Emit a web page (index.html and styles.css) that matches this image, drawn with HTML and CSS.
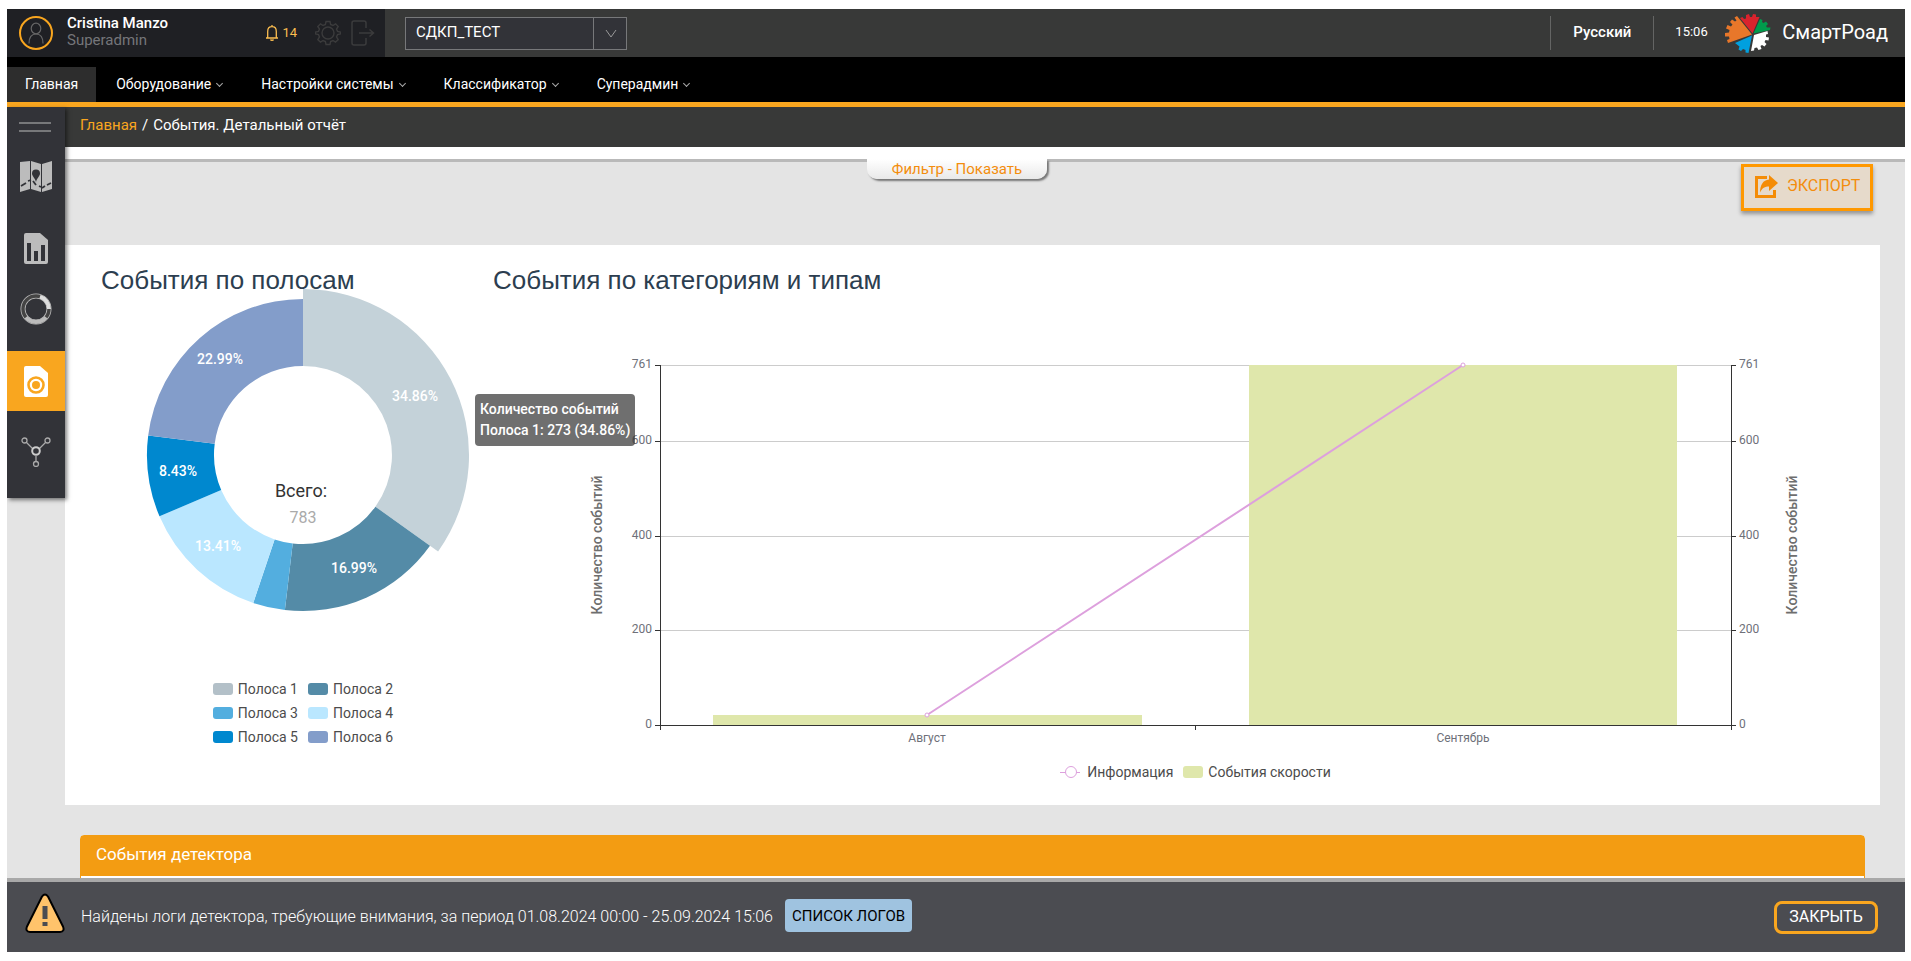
FILE: index.html
```html
<!DOCTYPE html>
<html lang="ru">
<head>
<meta charset="utf-8">
<meta name="viewport" content="width=device-width, initial-scale=1">
<title>СмартРоад — События. Детальный отчёт</title>
<link rel="stylesheet" href="styles.css">
</head>
<body>
<div class="app">
  <header class="topbar">
    <div class="user">
      <svg class="avatar" width="36" height="36" viewBox="0 0 36 36" fill="none">
        <circle cx="18" cy="18" r="16" stroke="#f9a61f" stroke-width="2"/>
        <ellipse cx="18" cy="13.5" rx="4.8" ry="5.3" stroke="#666" stroke-width="1.2"/>
        <path d="M11 28.500c0-6 2.500-9.500 7-9.500s7 3.500 7 9.500" stroke="#666" stroke-width="1.200"/>
      </svg>
      <div class="user-name"><strong>Cristina Manzo</strong><span>Superadmin</span></div>
      <button class="icon-btn bell" type="button" aria-label="Уведомления">
        <svg width="14" height="18" viewBox="0 0 14 18" fill="none" stroke="#fbbd50" stroke-width="1.300"><path d="M1 14h12M2.700 14V7.500C2.700 4.500 4.500 2.700 7 2.700s4.300 1.800 4.300 4.800V14M7 1v2M5.500 15.500c.3 1 2.700 1 3 0"/></svg>
        <span>14</span>
      </button>
      <button class="icon-btn gear" type="button" aria-label="Настройки">
        <svg width="26" height="26" viewBox="0 0 26 26" fill="none" stroke="#3b3b3c" stroke-width="1.400"><path d="M11 1.500h4l.6 3 2.300 1 2.700-1.700 2.600 2.700-1.700 2.600 1 2.300 3 .6v2l-3 .6-1 2.300 1.700 2.700-2.700 2.600-2.600-1.700-2.300 1-.6 3h-4l-.6-3-2.300-1-2.600 1.700-2.700-2.600 1.700-2.700-1-2.300-3-.6v-2l3-.6 1-2.300-1.700-2.600 2.700-2.700 2.600 1.700 2.300-1z"/><circle cx="13" cy="13" r="6"/></svg>
      </button>
      <button class="icon-btn exit" type="button" aria-label="Выйти">
        <svg width="24" height="26" viewBox="0 0 24 26" fill="none" stroke="#3b3b3c" stroke-width="1.500"><path d="M15 8V3c0-1-.8-2-2-2H3C1.800 1 1 2 1 3v20c0 1 .8 2 2 2h10c1.200 0 2-1 2-2v-5M8 13h14M18.500 9.500L22.500 13l-4 3.500"/></svg>
      </button>
    </div>
    <label class="object">
      <select aria-label="Объект"><option>СДКП_ТЕСТ</option></select>
      <span class="arrow"><svg width="12" height="9" viewBox="0 0 12 9" fill="none" stroke="#999"><path d="M1 1l5 7 5-7"/></svg></span>
    </label>
    <div class="top-right">
      <button class="lang" type="button">Русский</button>
      <time class="clock">15:06</time>
      <a class="brand" href="#">
        <svg width="46" height="40" viewBox="0 0 46 40">
          <path fill="#e8772a" d="M27 21.500L3 30 2 27l2.500-1L4 23.500H0V20l4-.5.5-2.500L1 15.500 2.500 12l3.500 1.500 1.500-2L5 9l2-2.500L10 8.500l1.500-1L9.500 4.500 12 3z"/>
          <path fill="#d9232d" d="M27.500 20.500L15 5l2.500-1L19 6l2-.5V2l3-1 1 3h2l1-3 3 .5v2.500l3.500 0z"/>
          <path fill="#009b4c" d="M28.500 20.500L35 6l2.500 1L37 9l1.500 1 2.500-1.500L43 11l-2 2 1 1.500h3.500L45 17z"/>
          <path fill="#fff" d="M29 22l13.500-4 .5 3-2 .5v2.500l3 .5-.5 3-3-.5-1 2 2 2-2 2.500-2.500-1.500-1.500 1 1 3-3 1-1.500-2.500-2.500.5-.5 2.500-3 .5z"/>
          <path fill="#00a0df" d="M27 22.500L23.500 40l-3-.5V37l-2.500-1-2 2-2.500-1.500 1-3L10 30z"/>
        </svg>
        <span>СмартРоад</span>
      </a>
    </div>
  </header>
  <nav class="menu">
    <a class="active" href="#">Главная</a>
    <a href="#">Оборудование<i></i></a>
    <a href="#">Настройки системы<i></i></a>
    <a href="#">Классификатор<i></i></a>
    <a href="#">Суперадмин<i></i></a>
  </nav>
  <div class="workspace">
    <aside class="sidebar">
      <button class="burger" type="button" aria-label="Меню"></button>
      <a class="side side-map" href="#" aria-label="Карта">
        <svg width="32" height="31" viewBox="0 0 32 31"><path fill="#bcbcbc" d="M0 1l10-1v28L0 31zM11 0l10 3v28l-10-3zM22 3l10-3v28l-10 3z"/><path fill="#323338" d="M16 21c-1-4-4-6-4-8.500a4 4 0 018 0C20 15 17 17 16 21z"/><path d="M1 25l5-3M8 20l3-1M13 20l3 4M19 25l2 1M22 27l3-2M27 24l4-2" stroke="#323338" stroke-width="1.800"/></svg>
      </a>
      <a class="side" href="#" aria-label="Отчёты">
        <svg width="24" height="31" viewBox="0 0 24 31"><path fill="#bcbcbc" d="M2 0h14l8 7v22a2 2 0 01-2 2H2a2 2 0 01-2-2V2a2 2 0 012-2z"/><path fill="#323338" d="M3 10h4v18H3zM10 18h4v10h-4zM17 12h4v16h-4z"/></svg>
      </a>
      <a class="side side-ring" href="#" aria-label="Статистика">
        <svg width="32" height="32" viewBox="0 0 32 32" fill="none"><circle cx="16" cy="16" r="13" stroke="#bbb" stroke-width="5"/><circle cx="16" cy="16" r="13" stroke="#444" stroke-width="3.400"/><path d="M20 3.600A13 13 0 0129 16" stroke="#ddd" stroke-width="4"/><path d="M26 24.300a13 13 0 01-20 0" stroke="#bbb" stroke-width="4"/></svg>
      </a>
      <a class="side active" href="#" aria-label="События">
        <svg width="24" height="31" viewBox="0 0 24 31" fill="none"><path fill="#fff" d="M2 0h14l8 7v22a2 2 0 01-2 2H2a2 2 0 01-2-2V2a2 2 0 012-2z"/><circle cx="12" cy="19" r="7.500" stroke="#f9a61f" stroke-width="2.600"/><circle cx="12" cy="19" r="4" fill="#f9a61f"/></svg>
      </a>
      <a class="side side-net" href="#" aria-label="Сеть">
        <svg width="30" height="30" viewBox="0 0 30 30" fill="none" stroke="#aaa" stroke-width="1.300"><path d="M5 5l7 7M25 5l-7 7M15 19v5"/><circle cx="3.500" cy="3.500" r="2.500"/><circle cx="26.500" cy="3.500" r="2.500"/><circle cx="15" cy="27" r="2.500"/><circle cx="15" cy="14" r="3.800" stroke="#ccc" stroke-width="2"/></svg>
      </a>
    </aside>
    <main class="content">
      <div class="crumbs"><a href="#">Главная</a><span>/</span><b>События. Детальный отчёт</b></div>
      <div class="toolbar">
        <button class="filter" type="button">Фильтр - Показать</button>
        <button class="export" type="button">
          <svg width="23" height="23" viewBox="0 0 23 23"><path fill="none" stroke="#f48c06" stroke-width="3" d="M12 2.500H1.500v19h18V15"/><path fill="#f48c06" d="M14 0l9 8-9 8v-4.500c-4 0-7 1.500-9 6C5 10 8 5 14 4.500z"/></svg>
          <span>ЭКСПОРТ</span>
        </button>
      </div>
      <section class="charts">
        <figure class="lanes">
          <h2>События по полосам</h2>
          <svg class="plot" viewBox="0 0 392 384">
            <g transform="translate(202 162)">
              <path fill="#c4d2d9" d="M0-166A166 166 0 01135.100 96.500L72.400 51.700A89 89 0 000-89z"/>
              <path fill="#548ba7" d="M127 90.700A156 156 0 01-18.100 155L-10.300 88.400A89 89 0 0072.400 51.700z"/>
              <path fill="#53aedf" d="M-18.100 155A156 156 0 01-49.700 147.900L-28.400 84.400A89 89 0 00-10.300 88.400z"/>
              <path fill="#bae7ff" d="M-49.700 147.900A156 156 0 01-143.500 61.300L-81.800 35A89 89 0 00-28.400 84.400z"/>
              <path fill="#0088cf" d="M-143.500 61.300A156 156 0 01-154.800-19.600L-88.300-11.200A89 89 0 00-81.800 35z"/>
              <path fill="#839dca" d="M-154.800-19.600A156 156 0 010-156V-89A89 89 0 00-88.300-11.200z"/>
            </g>
            <g class="slice-labels">
              <text x="314" y="108">34.86%</text>
              <text x="253" y="280">16.99%</text>
              <text x="117" y="258">13.41%</text>
              <text x="77" y="183">8.43%</text>
              <text x="119" y="71">22.99%</text>
            </g>
            <text class="total" x="200" y="204">Всего:</text>
            <text class="total-value" x="202" y="230">783</text>
          </svg>
          <ul class="legend lane-legend">
            <li class="l1">Полоса 1</li><li class="l2">Полоса 2</li>
            <li class="l3">Полоса 3</li><li class="l4">Полоса 4</li>
            <li class="l5">Полоса 5</li><li class="l6">Полоса 6</li>
          </ul>
          <div class="tooltip">Количество событий<br>Полоса 1: 273 (34.86%)</div>
        </figure>
        <figure class="types">
          <h2>События по категориям и типам</h2>
          <svg class="plot" viewBox="0 0 1387 467">
            <g class="grid"><path d="M167 72.500H1238M167 148.500H1238M167 243.500H1238M167 337.500H1238"/></g>
            <path fill="#dfe7ab" d="M220 422h429v10H220zM756 72h428v360H756z"/>
            <g class="axis"><path d="M167.500 72V437M1238.500 72V437M162 432.500H1243M702.500 432V437M162 72.500h5M162 148.500h5M162 243.500h5M162 337.500h5M1238 72.500h5M1238 148.500h5M1238 243.500h5M1238 337.500h5"/></g>
            <path class="trend" d="M434 422L970 72"/>
            <g fill="#fff" stroke="#dda0dd"><circle cx="434" cy="422" r="2"/><circle cx="970" cy="72" r="2"/></g>
            <g class="ticks left"><text x="159" y="75">761</text><text x="159" y="151">600</text><text x="159" y="246">400</text><text x="159" y="340">200</text><text x="159" y="435">0</text></g>
            <g class="ticks"><text x="1246" y="75">761</text><text x="1246" y="151">600</text><text x="1246" y="246">400</text><text x="1246" y="340">200</text><text x="1246" y="435">0</text></g>
            <g class="ticks mid"><text x="434" y="449">Август</text><text x="970" y="449">Сентябрь</text></g>
            <text class="axis-name" transform="translate(109 252) rotate(-90)">Количество событий</text>
            <text class="axis-name" transform="translate(1304 252) rotate(-90)">Количество событий</text>
          </svg>
          <ul class="legend type-legend">
            <li class="info">Информация</li><li class="speed">События скорости</li>
          </ul>
        </figure>
      </section>
      <section class="detector"><h3>События детектора</h3></section>
    </main>
  </div>
  <footer class="notice">
    <svg class="warning" width="40" height="40" viewBox="0 0 40 40"><path fill="#ffc36b" stroke="#000" stroke-width="2" stroke-linejoin="round" d="M17 3.500q3-4 6 0l15 30q2 5-3 5.500H5q-5-.5-3-5.500z"/><path fill="#4b4c51" d="M17.500 13h5v13h-5zM17.500 29h5v4h-5z"/></svg>
    <p>Найдены логи детектора, требующие внимания, за период 01.08.2024 00:00 - 25.09.2024 15:06</p>
    <button class="logs" type="button">СПИСОК ЛОГОВ</button>
    <button class="close" type="button">ЗАКРЫТЬ</button>
  </footer>
</div>
</body>
</html>
```
FILE: styles.css
```css
* { box-sizing: border-box; }
body {
  margin: 9px 6px 9px 7px;
  background: #fff;
  font: 14px/20px Roboto, "Open Sans", sans-serif;
  color: #333;
}
a { color: inherit; text-decoration: none; }
button { margin: 0; padding: 0; border: 0; background: none; font: inherit; color: inherit; cursor: pointer; }
h2, h3, p, ul, figure { margin: 0; padding: 0; }
ul { list-style: none; }
svg { flex: none; display: block; }

.app { display: flex; flex-direction: column; height: calc(100vh - 18px); overflow: hidden; background: #e4e4e4; }

.topbar { display: flex; flex: none; align-items: center; height: 48px; background: #383938; color: #fff; }
.user { display: flex; align-items: center; align-self: stretch; width: 378px; padding: 0 10px 0 11px; background: #1f2024; }
.user-name { display: flex; flex: 1; flex-direction: column; margin-left: 13px; padding-bottom: 2px; font-size: 15px; line-height: 17px; }
.user-name strong { font-weight: 500; }
.user-name span { color: #75767a; }
.icon-btn { display: flex; align-items: center; }
.bell { gap: 3px; margin-right: 18px; font-size: 13px; color: #fbbd50; }
.gear { margin-right: 10px; }
.object { display: flex; position: relative; margin-left: 20px; }
.object select {
  appearance: none; width: 222px; height: 33px; padding: 0 40px 2px 10px;
  border: 1px solid #77787a; border-radius: 0; background: #323338; color: #fff;
  font: 15px/20px Roboto, sans-serif;
}
.arrow {
  position: absolute; top: 0; right: 0; bottom: 0; width: 34px;
  display: flex; align-items: center; justify-content: center;
  border-left: 1px solid #77787a; pointer-events: none;
}
.top-right { display: flex; align-items: center; margin-left: auto; margin-right: 17px; }
.lang { width: 104px; height: 34px; border: solid #646564; border-width: 0 1px; padding-bottom: 2px; font-size: 15px; font-weight: 500; }
.clock { width: 71px; padding: 0 0 2px 21px; font-size: 13px; }
.brand { display: flex; align-items: center; gap: 11px; font-size: 20px; }
.brand span { padding-bottom: 2px; }

.menu { display: flex; flex: none; align-items: flex-end; height: 50px; border-bottom: 5px solid #f9a61f; background: #000; color: #fff; }
.menu a { display: flex; align-items: center; gap: 6px; height: 35px; padding: 0 19px 2px 20px; }
.menu a.active { padding: 0 18px 2px 18px; background: #2d2d2d; }
.menu i { width: 5px; height: 5px; border: solid #aaa; border-width: 0 1px 1px 0; transform: rotate(45deg); }

.workspace { display: flex; flex: 1; min-height: 0; align-items: flex-start; }
.sidebar { position: relative; z-index: 2; flex: none; width: 58px; height: 391px; background: #323338; box-shadow: 2px 2px 4px rgba(0, 0, 0, .5); }
.burger { display: block; width: 32px; height: 10px; margin: 15px 12px 2px; border: solid #77787a; border-width: 2px 0; }
.side { display: flex; align-items: center; justify-content: center; height: 60px; }
.side-map { height: 84px; }
.side-ring { height: 73px; padding-bottom: 11px; }
.side.active { background: #f9a61f; }
.side-net { height: 82px; }

.content { flex: 1; min-width: 0; }
.crumbs { display: flex; gap: 5px; height: 40px; padding: 0 15px; line-height: 36px; background: #383938; color: #fff; font-size: 15px; }
.crumbs a { color: #f9a61f; }
.crumbs b { font-weight: 400; }
.toolbar { position: relative; display: flex; justify-content: flex-end; align-items: flex-start; height: 98px; padding: 5px 32px 0 0; border-top: 12px solid #fff; }
.toolbar::before { content: ""; position: absolute; top: 0; left: 0; right: 0; height: 3px; background: #b9b9b9; }
.filter { position: absolute; top: 0; left: calc(50% - 118px); width: 180px; height: 20px; border-radius: 0 0 10px 10px; background: linear-gradient(#fff, #e9e9e9); box-shadow: 2px 2px 2px #777; color: #f38d0d; font-size: 15px; }
.export { display: flex; gap: 9px; width: 132px; height: 47px; padding: 8px 11px; border: 3px solid #ff9800; background: #e6dacb; box-shadow: 0 3px 4px rgba(0, 0, 0, .35); color: #f38d0d; font-size: 16px; line-height: 22px; }

.charts { display: flex; margin: 0 25px 30px 0; padding: 22px 0 21px 36px; background: #fff; }
.charts h2 { font: 26px/26px "Liberation Sans", Arial, sans-serif; color: #2c3e50; white-space: nowrap; }
.plot { width: 100%; overflow: visible; }
.plot text { font-family: Roboto, sans-serif; }
.lanes { position: relative; z-index: 1; flex: none; width: 392px; }
.types { flex: 1; min-width: 0; }
.slice-labels { fill: #fff; font-size: 14px; font-weight: 500; text-anchor: middle; }
.total { fill: #333; font-size: 18px; text-anchor: middle; }
.total-value { fill: #aaa; font-size: 16px; text-anchor: middle; }
.grid { stroke: #ccc; }
.axis { stroke: #333; fill: none; }
.trend { stroke: #dda0dd; stroke-width: 2; }
.ticks { fill: #6e7079; font-size: 12px; }
.ticks.left { text-anchor: end; }
.ticks.mid { text-anchor: middle; }
.axis-name { fill: #6e6e6e; font-size: 14px; font-weight: 500; text-anchor: middle; }
.tooltip { position: absolute; top: 127px; left: 374px; padding: 5px; border-radius: 4px; background: rgba(50, 50, 50, .7); color: #fff; font-weight: 500; line-height: 21px; white-space: nowrap; }

.legend { font-size: 14px; line-height: 24px; color: #4c4c4c; }
.legend li { display: flex; align-items: center; gap: 5px; }
.legend li::before { content: ""; width: 20px; height: 12px; border-radius: 3px; }
.lane-legend { display: grid; grid-template-columns: auto auto; justify-content: center; column-gap: 10px; padding-left: 12px; }
.legend .l1::before { background: #b3c0c8; }
.legend .l2::before { background: #548ba7; }
.legend .l3::before { background: #53aedf; }
.legend .l4::before { background: #bae7ff; }
.legend .l5::before { background: #0088cf; }
.legend .l6::before { background: #839dca; }
.type-legend { display: flex; justify-content: center; gap: 10px; padding-left: 18px; }
.legend .speed::before { background: #dfe7ab; }
.legend .info::before { width: 10px; height: 10px; margin: 0 5px; border: 1px solid #dda0dd; border-radius: 50%; background: #fff; }
.legend .info { background: linear-gradient(#dda0dd, #dda0dd) 0 50% / 20px 1px no-repeat; }

.detector { margin: 0 40px 0 15px; min-height: 300px; border: 1px solid #f39c12; border-radius: 4px 4px 0 0; background: #fff; }
.detector h3 { padding: 8px 15px 12px; background: #f39c12; color: #fff; font-size: 17px; font-weight: 400; line-height: 20px; }

.notice { position: relative; z-index: 3; display: flex; flex: none; align-items: center; height: 74px; padding: 0 27px 0 18px; border-top: 4px solid #a8a8a8; background: #4b4c51; color: #fff; font-size: 16px; }
.warning { margin-bottom: 8px; }
.notice p { margin: 0 12px 0 16px; font-weight: 300; }
.logs { height: 33px; margin-bottom: 3px; padding: 0 7px; border-radius: 4px; background: #9fc3e0; color: #000; font-size: 15px; }
.close { width: 104px; height: 33px; margin-left: auto; border: 3px solid #f9a61f; border-radius: 8px; }
```
